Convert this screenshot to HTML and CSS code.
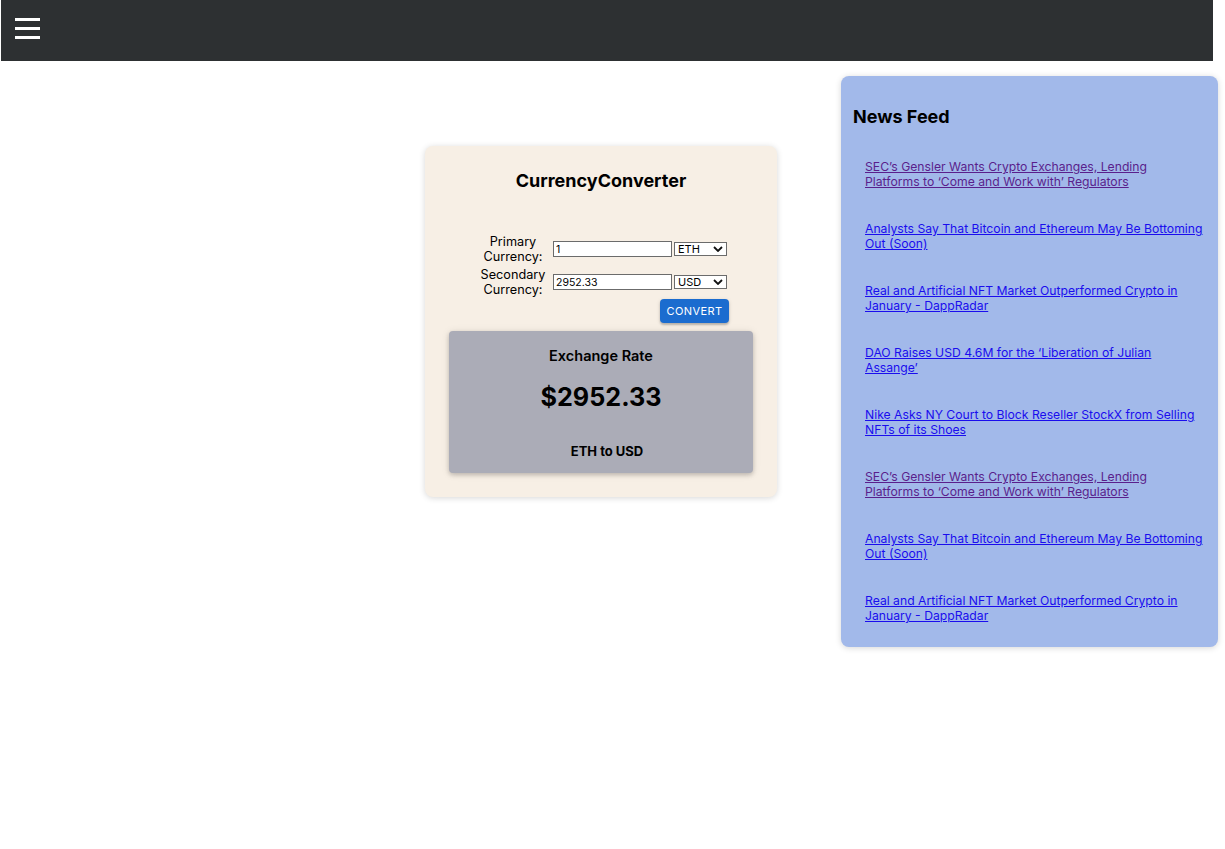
FILE: index.html
```html
<!DOCTYPE html>
<html>
<head>
<meta charset="utf-8">
<title>Currency Converter</title>
<link rel="stylesheet" href="styles.css">
</head>
<body>
<header class="topbar">
  <button class="menu-btn" aria-label="menu">
    <span class="bar"></span><span class="bar"></span><span class="bar"></span>
  </button>
</header>
<main class="main">
  <section class="converter">
    <h1 class="conv-title">CurrencyConverter</h1>
    <form class="conv-form">
      <label class="conv-label" for="primary">Primary<br>Currency:</label>
      <div class="conv-fields">
        <input class="conv-input" id="primary" type="text" value="1">
        <div class="select-wrap">
          <select class="conv-select"><option>ETH</option></select>
          <svg class="chev" viewBox="0 0 10 6" width="10" height="6"><path d="M1 1l4 4 4-4" fill="none" stroke="#111" stroke-width="1.8"/></svg>
        </div>
      </div>
      <label class="conv-label" for="secondary">Secondary<br>Currency:</label>
      <div class="conv-fields">
        <input class="conv-input" id="secondary" type="text" value="2952.33">
        <div class="select-wrap">
          <select class="conv-select"><option>USD</option></select>
          <svg class="chev" viewBox="0 0 10 6" width="10" height="6"><path d="M1 1l4 4 4-4" fill="none" stroke="#111" stroke-width="1.8"/></svg>
        </div>
      </div>
      <div class="btn-row">
        <button type="button" class="convert-btn">Convert</button>
      </div>
    </form>
    <div class="rate-box">
      <div class="rate-title">Exchange Rate</div>
      <div class="rate-value">$2952.33</div>
      <div class="rate-pair">ETH to USD</div>
    </div>
  </section>
  <aside class="news">
    <h2 class="news-title">News Feed</h2>
    <ul class="news-list">
      <li><a class="visited" href="#">SEC’s Gensler Wants Crypto Exchanges, Lending Platforms to ‘Come and Work with’ Regulators</a></li>
      <li><a href="#">Analysts Say That Bitcoin and Ethereum May Be Bottoming Out (Soon)</a></li>
      <li><a href="#">Real and Artificial NFT Market Outperformed Crypto in January - DappRadar</a></li>
      <li><a href="#">DAO Raises USD 4.6M for the ‘Liberation of Julian Assange’</a></li>
      <li><a href="#">Nike Asks NY Court to Block Reseller StockX from Selling NFTs of its Shoes</a></li>
      <li><a class="visited" href="#">SEC’s Gensler Wants Crypto Exchanges, Lending Platforms to ‘Come and Work with’ Regulators</a></li>
      <li><a href="#">Analysts Say That Bitcoin and Ethereum May Be Bottoming Out (Soon)</a></li>
      <li><a href="#">Real and Artificial NFT Market Outperformed Crypto in January - DappRadar</a></li>
    </ul>
  </aside>
</main>
</body>
</html>
```

FILE: styles.css
```css
* { box-sizing: border-box; }
html, body { margin: 0; padding: 0; background: #fff; }
body {
  font-family: Inter, "Noto Sans", "Liberation Sans", sans-serif;
  color: #000;
  width: 1225px;
  height: 849px;
  overflow: hidden;
}

.topbar {
  margin-left: 1px;
  width: 1212px;
  height: 61px;
  background: #2d3032;
  display: flex;
  align-items: flex-start;
}
.menu-btn {
  margin: 18px 0 0 14px;
  padding: 0;
  border: 0;
  background: transparent;
  display: flex;
  flex-direction: column;
  gap: 6px;
  cursor: pointer;
}
.bar {
  display: block;
  width: 25px;
  height: 3px;
  background: #fff;
  box-shadow: 0 0 0.6px rgba(160,160,160,0.9);
}

.main {
  display: flex;
  align-items: flex-start;
  padding: 15px 0 0 425px;
}

.converter {
  width: 352px;
  margin-top: 70px;
  background: #f7efe5;
  border-radius: 8px;
  box-shadow: 0 1px 6px rgba(0,0,0,0.16);
  padding: 24px 24px 24px 24px;
  display: flex;
  flex-direction: column;
}
.conv-title {
  margin: 0;
  font-size: 18px;
  line-height: 22px;
  font-weight: 700;
  text-align: center;
}
.conv-form {
  margin: 42px 0 0 31px;
  width: 248px;
  display: grid;
  grid-template-columns: 66px auto;
  column-gap: 7px;
  row-gap: 3px;
  align-items: center;
}
.conv-label {
  font-size: 12.7px;
  line-height: 15px;
  text-align: center;
}
.conv-fields {
  display: flex;
  align-items: center;
  gap: 2px;
}
.conv-input {
  width: 119px;
  height: 16px;
  margin: 0;
  border: 1px solid #6b6b6b;
  border-radius: 0;
  padding: 0 2px;
  font-family: Inter, "Liberation Sans", sans-serif;
  font-size: 10.5px;
  color: #000;
  background: #fff;
}
.select-wrap {
  position: relative;
  display: flex;
}
.conv-select {
  appearance: none;
  -webkit-appearance: none;
  width: 53px;
  height: 14px;
  margin: 0;
  border: 1px solid #6b6b6b;
  border-radius: 0;
  padding: 0 0 0 3px;
  font-family: Inter, "Liberation Sans", sans-serif;
  font-size: 11px;
  line-height: 12px;
  color: #000;
  background: #fff;
}
.chev {
  position: absolute;
  right: 4px;
  top: 4px;
  pointer-events: none;
}
.btn-row {
  grid-column: 1 / 3;
  display: flex;
  justify-content: flex-end;
  margin-right: -1px;
  margin-top: -1px;
}
.convert-btn {
  width: 69px;
  height: 24px;
  border: 0;
  border-radius: 4px;
  background: #1b6ccf;
  color: #fff;
  font-family: Inter, "Liberation Sans", sans-serif;
  font-size: 11px;
  letter-spacing: 0.4px;
  text-transform: uppercase;
  padding: 0;
  box-shadow: 0 2px 2px rgba(0,0,0,0.2), 0 1px 4px rgba(0,0,0,0.12);
}

.rate-box {
  margin-top: 8px;
  height: 142px;
  background: #abacb7;
  border-radius: 4px;
  box-shadow: 0 2px 4px rgba(0,0,0,0.18), 0 1px 8px rgba(0,0,0,0.1);
  display: flex;
  flex-direction: column;
  align-items: center;
  padding-top: 15px;
}
.rate-title {
  font-size: 14.5px;
  line-height: 20px;
  font-weight: 600;
}
.rate-value {
  margin-top: 15px;
  font-size: 25.2px;
  line-height: 32px;
  font-weight: 700;
}
.rate-pair {
  margin-top: 30px;
  padding-left: 12px;
  font-size: 13px;
  line-height: 16px;
  font-weight: 700;
}

.news {
  margin-left: 64px;
  width: 377px;
  background: #a2b9ea;
  border-radius: 8px;
  box-shadow: 0 1px 6px rgba(0,0,0,0.16);
  padding: 30px 12px 24px 12px;
}
.news-title {
  margin: 0;
  font-size: 18px;
  line-height: 22px;
  font-weight: 700;
}
.news-list {
  list-style: none;
  margin: 0;
  padding: 31px 3px 0 12px;
  display: flex;
  flex-direction: column;
  gap: 32px;
}
.news-list li {
  font-size: 12.2px;
  line-height: 15px;
  min-height: 30px;
}
.news-list a { color: #1a0dee; text-decoration: underline; }
.news-list a.visited { color: #5a1f8c; }
```
